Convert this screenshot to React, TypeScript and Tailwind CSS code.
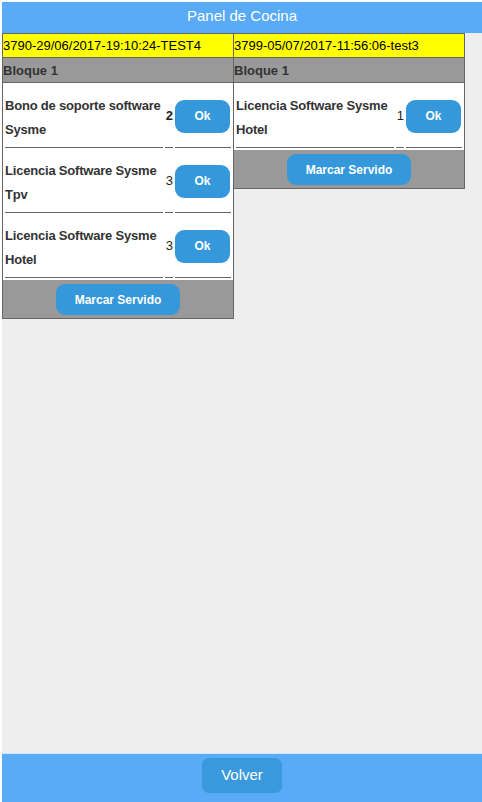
import React from "react"

type Item = {
  name: string
  qty: number
  strong?: boolean
}

type Order = {
  id: string
  block: string
  items: Item[]
}

const orders: Order[] = [
  {
    id: "3790-29/06/2017-19:10:24-TEST4",
    block: "Bloque 1",
    items: [
      { name: "Bono de soporte software Sysme", qty: 2, strong: true },
      { name: "Licencia Software Sysme Tpv", qty: 3 },
      { name: "Licencia Software Sysme Hotel", qty: 3 },
    ],
  },
  {
    id: "3799-05/07/2017-11:56:06-test3",
    block: "Bloque 1",
    items: [{ name: "Licencia Software Sysme Hotel", qty: 1 }],
  },
]

const OrderCard = ({ order }: { order: Order }) => {
  return (
    <div className="w-[232px] border border-[#666] bg-white">
      <div className="h-[24px] border-b border-[#666] bg-[#ffff00] text-[13px] leading-[24px] text-black">
        {order.id}
      </div>
      <div className="h-[25px] border-b border-[#666] bg-[#999] text-[13px] font-bold leading-[25px] text-[#333]">
        {order.block}
      </div>
      <table className="w-full table-fixed border-separate border-spacing-[2px] bg-white">
        <colgroup>
          <col />
          <col className="w-[8px]" />
          <col className="w-[56px]" />
        </colgroup>
        <tbody>
          {order.items.map((item, i) => (
            <tr key={i}>
              <td className="border-b border-[#666] pt-[9px] pb-[5px] align-middle text-[13px] font-bold leading-[24px] tracking-[-0.2px] text-[#333]">
                {item.name}
              </td>
              <td
                className={
                  item.strong
                    ? "border-b border-[#666] text-right align-middle text-[13px] font-bold text-[#222]"
                    : "border-b border-[#666] text-right align-middle text-[13px] text-[#222]"
                }
              >
                {item.qty}
              </td>
              <td className="border-b border-[#666] align-middle">
                <button className="h-[33px] w-[55px] rounded-[9px] bg-[#3498db] text-[12px] font-bold text-white">
                  Ok
                </button>
              </td>
            </tr>
          ))}
        </tbody>
      </table>
      <div className="flex justify-center bg-[#999] pt-[4px] pb-[3px]">
        <button className="h-[31px] rounded-[9px] bg-[#3498db] px-[19px] text-[12px] font-bold text-white">
          Marcar Servido
        </button>
      </div>
    </div>
  )
}

const App = () => {
  return (
    <div className="h-[802px] bg-white pl-[2px] pt-[2px] font-['Liberation_Sans',Arial,sans-serif]">
      <div className="flex h-[800px] flex-col bg-[#eeeeee]">
        <div className="h-[31px] shrink-0 bg-[#59abf8] text-center text-[15px] leading-[27px] text-white">
          Panel de Cocina
        </div>
        <div className="flex flex-1 items-start">
          {orders.map((order, i) => (
            <div key={i} className={i > 0 ? "-ml-px" : ""}>
              <OrderCard order={order} />
            </div>
          ))}
        </div>
        <div className="flex h-[49px] shrink-0 justify-center border-t border-[#cfe6fb] bg-[#59abf8] pt-[4px]">
          <button className="h-[35px] rounded-[7px] bg-[#3a99dc] px-[19px] text-[15px] text-white">
            Volver
          </button>
        </div>
      </div>
    </div>
  )
}

export default App
